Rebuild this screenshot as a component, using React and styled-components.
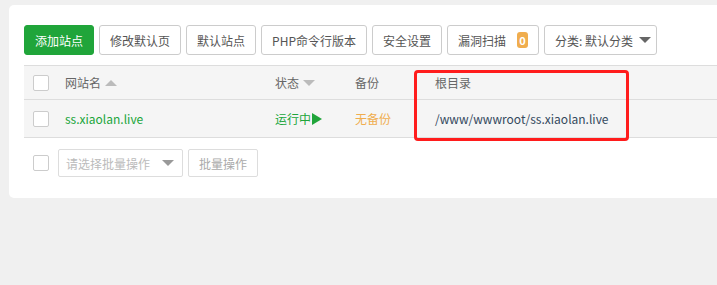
import React from 'react';
import styled, { createGlobalStyle } from 'styled-components';

const Global = createGlobalStyle`
  body {
    margin: 0;
    background: #f0f0f0;
    overflow: hidden;
    font-family: "Noto Sans CJK SC", "Noto Sans", sans-serif;
    font-size: 12px;
    color: #333;
  }
`;

const Page = styled.div`
  padding: 5px 0 0 9px;
  width: 1100px;
`;

const Card = styled.div`
  position: relative;
  background: #fff;
  border-radius: 5px;
  padding: 20px 15px 21px;
`;

const Toolbar = styled.div`
  display: flex;
  gap: 5px;
  height: 30px;
`;

const Button = styled.button`
  height: 30px;
  padding: 0 ${(p) => p.pr || 10}px 0 10px;
  border: 1px solid ${(p) => (p.primary ? '#20a53a' : '#ccc')};
  border-radius: 3px;
  background: ${(p) => (p.primary ? '#20a53a' : '#fff')};
  color: ${(p) => (p.primary ? '#fff' : '#555')};
  font-family: inherit;
  font-size: 12px;
  display: flex;
  align-items: center;
  gap: ${(p) => p.gap || 6}px;
`;

const Badge = styled.span`
  display: inline-flex;
  align-items: center;
  justify-content: center;
  width: 11px;
  height: 16px;
  border-radius: 3px;
  background: #f0ad4e;
  color: #fff;
  font-size: 11px;
  font-weight: bold;
`;

const Caret = styled.span`
  width: 0;
  height: 0;
  border-left: 6px solid transparent;
  border-right: 6px solid transparent;
  border-${(p) => (p.up ? 'bottom' : 'top')}: 6px solid ${(p) => p.color || '#666'};
  margin-left: ${(p) => (p.gap === undefined ? 8 : p.gap)}px;
`;

const Table = styled.div`
  margin-top: 10px;
  border-top: 1px solid #ddd;
`;

const Row = styled.div`
  display: grid;
  grid-template-columns: 41px 210px 80px 80px 1fr;
  align-items: center;
  height: ${(p) => p.h}px;
  background: #f5f5f5;
  border-bottom: 1px solid #ddd;
  color: ${(p) => (p.head ? '#666' : '#333')};
`;

const Cell = styled.div`
  display: flex;
  align-items: center;
  color: ${(p) => p.color || 'inherit'};
`;

const Check = styled.span`
  display: block;
  width: 14px;
  height: 14px;
  border: 1px solid #ccc;
  border-radius: 2px;
  background: #fff;
  margin-left: 9px;
`;

const Play = styled.span`
  width: 0;
  height: 0;
  border-top: 6px solid transparent;
  border-bottom: 6px solid transparent;
  border-left: 10px solid #20a53a;
  margin-left: 1px;
`;

const Footer = styled.div`
  display: flex;
  align-items: center;
  gap: 5px;
  margin-top: 11px;
  height: 28px;
`;

const Select = styled.div`
  width: 125px;
  height: 28px;
  border: 1px solid #ddd;
  border-radius: 2px;
  display: flex;
  align-items: center;
  justify-content: space-between;
  padding: 0 8px 0 7px;
  box-sizing: border-box;
  color: #bbb;
  margin-left: 4px;
`;

const GhostButton = styled.div`
  height: 28px;
  box-sizing: border-box;
  padding: 0 10px;
  border: 1px solid #ddd;
  border-radius: 2px;
  display: flex;
  align-items: center;
  color: #aaa;
`;

const Highlight = styled.div`
  position: absolute;
  left: 405px;
  top: 65px;
  width: 209px;
  height: 65px;
  border: 3px solid #ff1c1c;
  border-radius: 4px;
  pointer-events: none;
`;

export default function App() {
  return (
    <Page>
      <Global />
      <Card>
        <Toolbar>
          <Button primary>添加站点</Button>
          <Button>修改默认页</Button>
          <Button>默认站点</Button>
          <Button>PHP命令行版本</Button>
          <Button>安全设置</Button>
          <Button gap={11}>
            漏洞扫描<Badge>0</Badge>
          </Button>
          <Button pr={5}>
            分类: 默认分类<Caret color="#666" gap={0} />
          </Button>
        </Toolbar>

        <Table>
          <Row head h={33}>
            <Cell><Check /></Cell>
            <Cell>
              网站名 <Caret up color="#bbb" gap={4} />
            </Cell>
            <Cell>
              状态 <Caret color="#bbb" gap={4} />
            </Cell>
            <Cell>备份</Cell>
            <Cell>根目录</Cell>
          </Row>
          <Row h={37}>
            <Cell><Check /></Cell>
            <Cell color="#20a53a">ss.xiaolan.live</Cell>
            <Cell color="#20a53a">
              运行中<Play />
            </Cell>
            <Cell color="#f0ad4e">无备份</Cell>
            <Cell color="#34495e">/www/wwwroot/ss.xiaolan.live</Cell>
          </Row>
        </Table>

        <Footer>
          <Check />
          <Select>
            请选择批量操作<Caret color="#999" gap={0} />
          </Select>
          <GhostButton>批量操作</GhostButton>
        </Footer>

        <Highlight />
      </Card>
    </Page>
  );
}
